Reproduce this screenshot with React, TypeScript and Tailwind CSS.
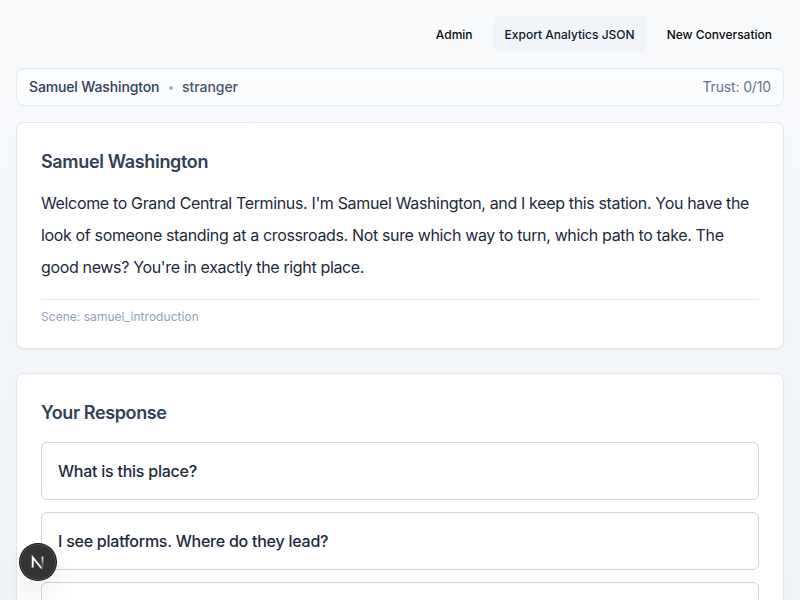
import React from "react";

const choices = ["What is this place?", "I see platforms. Where do they lead?", ""];

function NextBadge() {
  return (
    <div className="fixed left-5 top-[544px] flex h-9 w-9 items-center justify-center rounded-full bg-[#333333] shadow-[0_0_0_1px_#171717,inset_0_0_0_1px_rgba(255,255,255,0.14),0_16px_32px_-8px_rgba(0,0,0,0.24)]">
      <svg width="40" height="40" viewBox="0 0 40 40" fill="none" className="shrink-0">
        <defs>
          <linearGradient id="diag" x1="18" y1="18" x2="25" y2="27" gradientUnits="userSpaceOnUse">
            <stop stopColor="white" />
            <stop offset="0.7" stopColor="white" />
            <stop offset="1" stopColor="white" stopOpacity="0.2" />
          </linearGradient>
          <linearGradient id="stem" x1="24" y1="14" x2="24" y2="25" gradientUnits="userSpaceOnUse">
            <stop stopColor="white" />
            <stop offset="1" stopColor="white" stopOpacity="0.1" />
          </linearGradient>
        </defs>
        <path d="M14.7 25.6V15.4L24.2 27" stroke="url(#diag)" strokeWidth="1.9" />
        <path d="M24.5 14.6V25.6" stroke="url(#stem)" strokeWidth="1.7" />
      </svg>
    </div>
  );
}

export default function App() {
  return (
    <div className="h-[600px] overflow-hidden bg-linear-to-b from-slate-50 to-slate-100 p-4 font-['Inter',sans-serif]">
      <header className="mb-4 flex justify-end gap-2 text-xs font-medium text-neutral-950">
        <button className="h-9 px-3 pt-0.5">Admin</button>
        <button className="h-9 rounded-md bg-slate-100 px-3 pt-0.5 text-slate-900">Export Analytics JSON</button>
        <button className="h-9 px-3 pt-0.5">New Conversation</button>
      </header>
      <div className="mb-4 flex h-[38px] items-center justify-between rounded-lg border border-slate-200 bg-white/50 px-3 text-sm">
        <div className="flex items-center font-medium text-slate-700">
          <span className="tracking-[-0.14px]">Samuel Washington</span>
          <svg width="4" height="4" viewBox="0 0 4 4" className="mr-[9.2px] ml-[9.5px] mt-px text-slate-400">
            <circle cx="2" cy="2" r="1.8" fill="currentColor" />
          </svg>
          <span className="tracking-[-0.05px] text-slate-600">stranger</span>
        </div>
        <span className="tracking-[-0.14px] text-slate-500">Trust: 0/10</span>
      </div>
      <section className="mb-6 h-[227px] rounded-lg border border-slate-200 bg-white p-6 shadow-[0_1px_2px_0_rgba(0,0,0,0.05)]">
        <h2 className="mb-3 pt-px text-lg leading-[27px] font-semibold tracking-[-0.34px] text-slate-700">Samuel Washington</h2>
        <p className="text-base leading-8 tracking-[-0.35px] text-slate-800">
          Welcome to Grand Central Terminus. I'm Samuel Washington, and I keep this station. You have the look of someone standing at a crossroads. Not sure which way to turn, which path to take. The good news? You're in exactly the right place.
        </p>
        <div className="mt-4 border-t border-slate-200 pt-[9px] text-xs tracking-[0.04px] text-slate-400">Scene: samuel_introduction</div>
      </section>
      <section className="rounded-lg border border-slate-200 bg-white p-6 shadow-[0_1px_2px_0_rgba(0,0,0,0.05)]">
        <h2 className="mb-4 pt-px text-lg leading-[27px] font-semibold tracking-[-0.38px] text-slate-700">Your Response</h2>
        <div className="flex flex-col gap-3">
          {choices.map((choice, index) => (
            <button key={index} className="h-[58px] rounded-md border border-slate-300 bg-white px-4 text-left text-base font-medium tracking-[-0.24px] text-slate-800">{choice}</button>
          ))}
        </div>
      </section>
      <NextBadge />
    </div>
  );
}
